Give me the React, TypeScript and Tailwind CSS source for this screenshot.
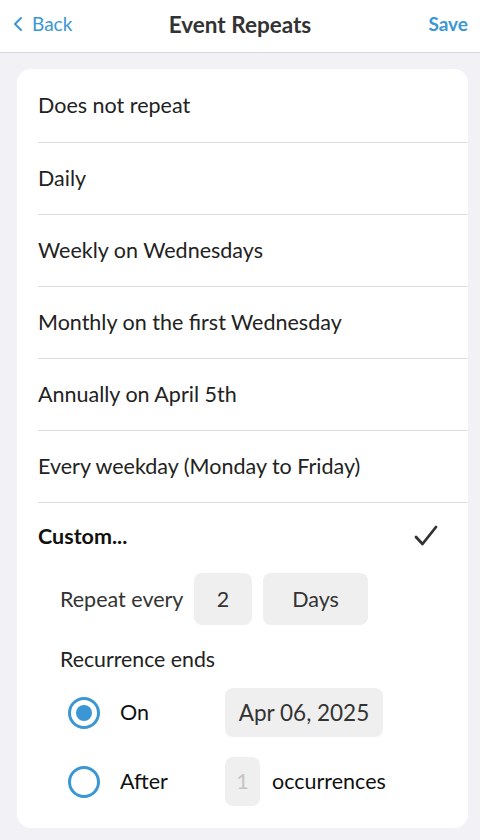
import React from "react";

const font = { fontFamily: "Lato, 'Noto Sans', sans-serif" };

export default function App() {
  const options = [
    "Does not repeat",
    "Daily",
    "Weekly on Wednesdays",
    "Monthly on the first Wednesday",
    "Annually on April 5th",
    "Every weekday (Monday to Friday)",
  ];

  return (
    <div className="w-[480px] h-[840px] bg-[#f1f1f6] overflow-hidden text-[#222]" style={font}>
      {/* header */}
      <div className="h-[53px] bg-white border-b border-[#d9d9de] flex items-center justify-between px-3 pb-[4px] relative">
        <button className="flex items-center gap-1 text-[#3b97d3] text-[19px]">
          <svg width="12" height="18" viewBox="0 0 12 18" fill="none">
            <path d="M9 3 L3 9 L9 15" stroke="#3b97d3" strokeWidth="2" strokeLinecap="round" strokeLinejoin="round" />
          </svg>
          <span className="ml-1">Back</span>
        </button>
        <div className="absolute left-0 right-0 top-[8px] text-center text-[22.5px] font-bold text-[#333] pointer-events-none">
          Event Repeats
        </div>
        <button className="text-[#3b97d3] text-[19px] font-bold">Save</button>
      </div>

      {/* card */}
      <div className="ml-[17px] mr-[12px] mt-[16px] bg-white rounded-[14px] h-[759px]">
        <div className="pl-[21px]">
          {options.map((o, i) => (
            <div
              key={o}
              className={`border-b border-[#dcdcdc] flex items-center text-[21.5px] ${i === 0 ? "h-[74px]" : "h-[72px]"}`}
            >
              {o}
            </div>
          ))}

          <div className="h-[66px] flex items-center justify-between pr-[30px] text-[21.5px] font-bold text-[#111]">
            <span>Custom...</span>
            <svg width="24" height="22" viewBox="0 0 24 22" fill="none">
              <path d="M2 12 L8.5 19 L22 2" stroke="#333" strokeWidth="2.8" strokeLinecap="round" strokeLinejoin="round" />
            </svg>
          </div>

          <div className="pl-[22px]">
            <div className="flex items-center h-[52px] mt-[4px] text-[21.5px] text-[#333]">
              <span className="w-[134px]">Repeat every</span>
              <div className="w-[58px] h-[52px] rounded-[8px] bg-[#efefef] flex items-center justify-center">2</div>
              <div className="ml-[11px] w-[105px] h-[52px] rounded-[8px] bg-[#efefef] flex items-center justify-center">Days</div>
            </div>

            <div className="mt-[20px] text-[21.3px] leading-[28px] text-[#222]">Recurrence ends</div>

            <div className="flex items-center h-[49px] mt-[15px] text-[21.5px]">
              <div className="w-[32px] h-[32px] ml-[8px] rounded-full border-[3px] border-[#3b97d3] flex items-center justify-center">
                <div className="w-[16px] h-[16px] rounded-full bg-[#3b97d3]" />
              </div>
              <span className="ml-[20px] w-[105px] text-[#111]">On</span>
              <div className="w-[158px] h-[49px] rounded-[8px] bg-[#efefef] flex items-center justify-center text-[22.5px] text-[#333]">
                Apr 06, 2025
              </div>
            </div>

            <div className="flex items-center h-[49px] mt-[20px] text-[21.5px]">
              <div className="w-[32px] h-[32px] ml-[8px] rounded-full border-[3px] border-[#3b97d3]" />
              <span className="ml-[20px] w-[105px] text-[#111]">After</span>
              <div className="w-[35px] h-[49px] rounded-[8px] bg-[#efefef] flex items-center justify-center text-[#c4c4c4]">1</div>
              <span className="ml-[12px] text-[#111]">occurrences</span>
            </div>
          </div>
        </div>
      </div>
    </div>
  );
}
